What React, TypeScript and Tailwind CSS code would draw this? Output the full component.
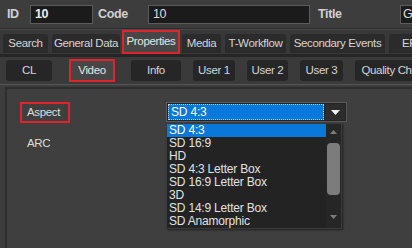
import React from "react";

const tabs = [
  { label: "Search", w: "w-[45px]" },
  { label: "General Data", w: "w-[68px]" },
  { label: "Properties", w: "w-[58px]", active: true },
  { label: "Media", w: "w-[39px]" },
  { label: "T-Workflow", w: "w-[61px]" },
  { label: "Secondary Events", w: "w-[95px]" },
  { label: "EF", w: "w-[40px]" },
];

const subTabs = [
  { label: "CL", w: "w-[46px]" },
  { label: "Video", w: "w-[46px]", active: true },
  { label: "Info", w: "w-[50px]" },
  { label: "User 1", w: "w-[42px]" },
  { label: "User 2", w: "w-[41px]" },
  { label: "User 3", w: "w-[43px]" },
  { label: "Quality Check", w: "w-[80px]" },
];

const aspects = [
  "SD 4:3",
  "SD 16:9",
  "HD",
  "SD 4:3 Letter Box",
  "SD 16:9 Letter Box",
  "3D",
  "SD 14:9 Letter Box",
  "SD Anamorphic",
];

export default function App() {
  return (
    <div className="w-[412px] h-[248px] overflow-hidden bg-[#3d3d3d] text-[#dcdcdc] font-['Liberation_Sans',Arial,sans-serif] text-[11.5px] tracking-[-0.35px] flex flex-col">
      {/* header fields */}
      <div className="h-[29px] shrink-0 flex items-center pl-[7px] border-b border-[#2a2a2a]">
        <span className="w-[23px] shrink-0 font-bold text-[12.5px] text-[#d0d0d0]">ID</span>
        <div className="w-[63px] h-[19px] shrink-0 bg-[#1b1b1b] border border-[#5c5c5c] pl-[4px] flex items-center font-bold text-[12.5px] text-[#eeeeee]">
          10
        </div>
        <span className="w-[50px] ml-[5px] shrink-0 font-bold text-[12.5px] text-[#d0d0d0]">Code</span>
        <div className="w-[162px] h-[19px] shrink-0 bg-[#1b1b1b] border border-[#5c5c5c] pl-[4px] flex items-center text-[12.5px] text-[#dddddd]">
          10
        </div>
        <span className="w-[82px] ml-[8px] shrink-0 font-bold text-[12.5px] text-[#d0d0d0]">Title</span>
        <div className="w-[100px] h-[19px] shrink-0 bg-[#1b1b1b] border border-[#5c5c5c] pl-[2px] flex items-center text-[12.5px] text-[#dddddd]">
          G-
        </div>
      </div>

      {/* main tabs */}
      <div className="h-[25px] shrink-0 flex items-end gap-[4px] pl-[3px] border-t border-[#4a4a4a] bg-[#383838]">
        {tabs.map((t) =>
          t.active ? (
            <div
              key={t.label}
              className={`${t.w} h-[24px] shrink-0 -mx-[2px] border-2 border-[#e0242c] flex items-center justify-center`}
            >
              <div className="w-full h-full bg-[#474747] flex items-center justify-center text-[#e6e6e6]">
                {t.label}
              </div>
            </div>
          ) : (
            <div
              key={t.label}
              className={`${t.w} h-[19px] mb-[1px] shrink-0 rounded-t-[3px] bg-[#2b2b2b] flex items-center justify-center text-[#d6d6d6] whitespace-nowrap overflow-hidden`}
            >
              {t.label}
            </div>
          )
        )}
      </div>

      {/* sub tabs */}
      <div className="h-[31px] shrink-0 flex items-center gap-[12px] pl-[6px] border-t-[3px] border-[#262626] border-b border-b-[#555555] bg-[#3a3a3a]">
        {subTabs.map((t, i) =>
          t.active ? (
            <div
              key={t.label}
              className={`${t.w} h-[23px] shrink-0 ml-[5px] border-2 border-[#e0242c] bg-[#464646] flex items-center justify-center text-[#e6e6e6]`}
            >
              {t.label}
            </div>
          ) : (
            <div
              key={t.label}
              className={`${t.w} h-[21px] shrink-0 ${i === 2 ? "ml-[4px]" : ""} rounded-[3px] bg-[#262626] flex items-center justify-center text-[#d6d6d6] whitespace-nowrap overflow-hidden`}
            >
              {t.label}
            </div>
          )
        )}
      </div>

      {/* content panel */}
      <div className="flex-1 ml-[5px] mt-[2px] border-l-2 border-t-2 border-[#2e2e2e] bg-[#3f3f3f] flex pt-[13px]">
        <div className="w-[159px] shrink-0 pl-[13px] flex flex-col">
          <div className="w-[50px] h-[21px] border-2 border-[#e0242c] flex items-center pl-[5px] text-[#dddddd]">
            Aspect
          </div>
          <div className="pl-[7px] mt-[12px] text-[#dddddd]">ARC</div>
        </div>

        <div className="flex flex-col w-[181px] shrink-0">
          {/* combo */}
          <div className="h-[20px] border border-[#5a5a5a] bg-[#242424] flex items-stretch p-[1px]">
            <div className="flex-1 bg-[#0a78d8] border border-dotted border-[#d0d0d0] flex items-center pl-[2px] text-white text-[12px] tracking-[-0.2px]">
              SD 4:3
            </div>
            <div className="w-[20px] ml-[1px] bg-[#2c2c2c] flex items-center justify-center">
              <svg width="9" height="6" viewBox="0 0 9 6">
                <path d="M0 1h9L4.5 6z" fill="#f0f0f0" />
              </svg>
            </div>
          </div>

          {/* dropdown list */}
          <div className="w-[176px] h-[106px] mt-[1px] bg-[#232323] border border-[#3a3a3a] flex shadow-[1px_1px_2px_rgba(0,0,0,0.5)]">
            <div className="flex-1 flex flex-col tracking-[-0.2px] text-[12px]">
              {aspects.map((a, i) => (
                <div
                  key={a}
                  className={`h-[13px] leading-[13px] pl-[2px] whitespace-nowrap ${
                    i === 0 ? "bg-[#0a78d8] text-white" : "text-[#e2e2e2]"
                  }`}
                >
                  {a}
                </div>
              ))}
            </div>
            <div className="w-[15px] flex flex-col items-center bg-[#262626]">
              <svg width="7" height="4" viewBox="0 0 7 4" className="mt-[6px]">
                <path d="M0 4h7L3.5 0z" fill="#7c7c7c" />
              </svg>
              <div className="w-[13px] h-[52px] mt-[9px] rounded-[4px] bg-[#7c7c7c]" />
              <svg width="7" height="4" viewBox="0 0 7 4" className="mt-[20px]">
                <path d="M0 0h7L3.5 4z" fill="#7c7c7c" />
              </svg>
            </div>
          </div>
        </div>
      </div>
    </div>
  );
}
